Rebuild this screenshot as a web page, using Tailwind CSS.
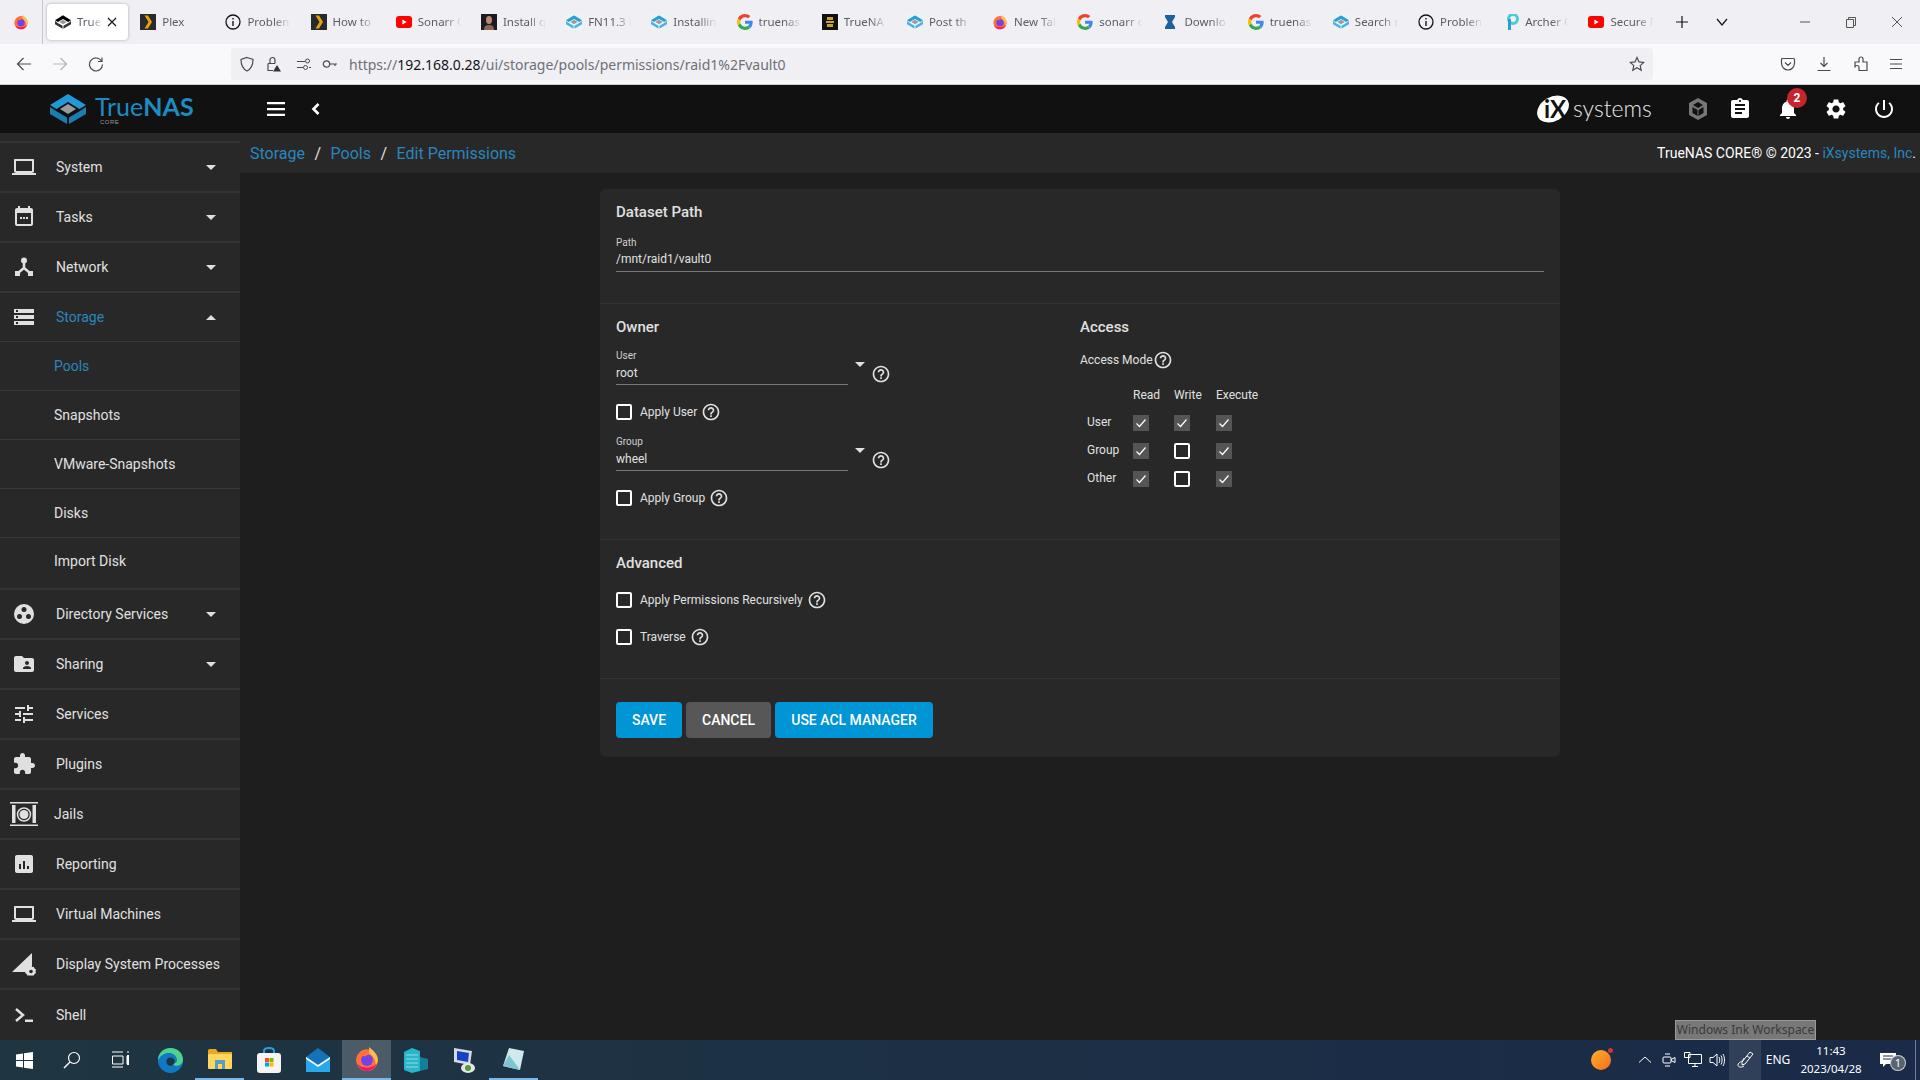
<!DOCTYPE html>
<html lang="en">
<head>
  <meta charset="UTF-8">
  <meta name="viewport" content="width=device-width, initial-scale=1">
  <title>TrueNAS - Edit Permissions</title>
  <script src="https://cdn.jsdelivr.net/npm/@tailwindcss/browser@4"></script>
</head>
<body class="w-[1920px] h-[1080px] overflow-hidden flex flex-col bg-[#1e1e1e] font-['Roboto',sans-serif] text-[14px] text-[#e0e0e0]">

  <!-- shared icons -->
  <svg class="hidden">
    <symbol id="help" viewBox="0 0 24 24"><path fill="currentColor" d="M11 18h2v-2h-2v2zm1-16C6.48 2 2 6.48 2 12s4.48 10 10 10 10-4.48 10-10S17.52 2 12 2zm0 18c-4.41 0-8-3.59-8-8s3.59-8 8-8 8 3.59 8 8-3.59 8-8 8zm0-14c-2.21 0-4 1.79-4 4h2c0-1.1.9-2 2-2s2 .9 2 2c0 2-3 1.75-3 5h2c0-2.25 3-2.5 3-5 0-2.21-1.79-4-4-4z"/></symbol>
    <symbol id="laptop" viewBox="0 0 24 24"><path fill="currentColor" d="M20 18c1.1 0 2-.9 2-2V5c0-.6-.4-1-1-1H3c-.6 0-1 .4-1 1v11c0 1.1.9 2 2 2H0v2h24v-2h-4zM4 6h16v10H4V6z"/></symbol>
    <symbol id="logo" viewBox="0 0 36 30">
      <path fill="currentColor" d="M18 0 36 11 29.5 15 18 8 6.5 15 0 11z"/>
      <path fill="#9a9a9a" d="M18 10 26 15 18 20 10 15z"/>
      <path fill="currentColor" d="M0 13 6 17 17 23.5V30L0 20zM36 13 30 17 19 23.5V30L36 20z" opacity=".8"/>
    </symbol>
    <symbol id="gicon" viewBox="0 0 48 48">
      <path fill="#EA4335" d="M24 9.5c3.54 0 6.71 1.22 9.21 3.6l6.85-6.85C35.9 2.38 30.47 0 24 0 14.62 0 6.51 5.38 2.56 13.22l7.98 6.19C12.43 13.72 17.74 9.5 24 9.5z"/>
      <path fill="#4285F4" d="M46.98 24.55c0-1.57-.15-3.09-.38-4.55H24v9.02h12.94c-.58 2.96-2.26 5.48-4.78 7.18l7.73 6c4.51-4.18 7.09-10.36 7.09-17.65z"/>
      <path fill="#FBBC05" d="M10.53 28.59c-.48-1.45-.76-2.99-.76-4.59s.27-3.14.76-4.59l-7.98-6.19C.92 16.46 0 20.12 0 24c0 3.88.92 7.54 2.56 10.78l7.97-6.19z"/>
      <path fill="#34A853" d="M24 48c6.48 0 11.93-2.13 15.89-5.81l-7.73-6c-2.15 1.45-4.92 2.3-8.16 2.3-6.26 0-11.57-4.22-13.47-9.91l-7.98 6.19C6.51 42.62 14.62 48 24 48z"/>
    </symbol>
    <symbol id="plex" viewBox="0 0 16 16"><rect width="16" height="16" fill="#282a2d"/><path fill="#e5a00d" d="M4.5 1.5H8L12 8 8 14.500H4.500L8.500 8z"/></symbol>
    <symbol id="info" viewBox="0 0 16 16"><circle cx="8" cy="8" r="7" fill="none" stroke="#15141a" stroke-width="1.300"/><path fill="#15141a" d="M7.300 7h1.400v5H7.300zM7.300 4h1.400v1.500H7.300z"/></symbol>
    <symbol id="yt" viewBox="0 0 16 16"><rect y="2" width="16" height="12" rx="3" fill="#f00"/><path fill="#fff" d="M6.400 5.400 10.800 8 6.400 10.600z"/></symbol>
    <symbol id="tn" viewBox="0 0 36 30"><rect x="-3" y="-3" width="42" height="36" fill="#eaf5fa"/><use href="#logo" class="text-[#2a9fd6]"/></symbol>
    <symbol id="fox" viewBox="0 0 24 24">
      <circle cx="12" cy="13" r="10" fill="#ff7139"/>
      <path fill="#ffbd4f" d="M14 1c3 3 8 6 8 12 0 2-1 4-2 5 0-6-3-9-6-11z"/>
      <path fill="#f5156c" d="M3 16c1 4 5 7 9 7s8-3 9-7c-2 3-5 4-9 4s-7-1-9-4z"/>
      <circle cx="12" cy="13" r="5.500" fill="#7542e5"/>
      <path fill="#ff7139" d="M6 8c2-2 6-2 8 0-2 0-3 1-4 2-1-1-2-2-4-2z"/>
    </symbol>
  </svg>

  <!-- browser tabs -->
  <div class="h-[44px] shrink-0 bg-[#f0f0f4] flex items-center font-['Noto_Sans',sans-serif] text-[11.5px] text-[#5b5b66]">
    <div class="w-[42px] h-full border-r border-[#c8c8cc] flex items-center justify-center mr-[2px] box-content">
      <svg class="w-[16px] h-[16px]"><use href="#fox"/></svg>
    </div>
    <div class="w-[85.2px] px-[2px] shrink-0">
      <div class="h-[36px] bg-white rounded-[4px] shadow-[0_0_3px_rgba(0,0,0,0.3)] flex items-center pl-[8px]">
        <svg class="w-[16px] h-[16px] text-black shrink-0"><use href="#logo"/></svg>
        <span class="ml-[6px] w-[26px] whitespace-nowrap [mask-image:linear-gradient(to_right,black_50%,transparent)]">True</span>
        <svg class="w-[12px] h-[12px] ml-[3px] shrink-0" viewBox="0 0 12 12"><path stroke="#15141a" stroke-width="1.200" d="M2 2l8 8M10 2l-8 8"/></svg>
      </div>
    </div>
    <div class="w-[85.2px] px-[10px] shrink-0 flex items-center"><svg class="w-[16px] h-[16px] shrink-0"><use href="#plex"/></svg><span class="ml-[6px] w-[44px] whitespace-nowrap [mask-image:linear-gradient(to_right,black_60%,transparent)]">Plex</span></div>
    <div class="w-[85.2px] px-[10px] shrink-0 flex items-center"><svg class="w-[16px] h-[16px] shrink-0"><use href="#info"/></svg><span class="ml-[6px] w-[44px] whitespace-nowrap [mask-image:linear-gradient(to_right,black_60%,transparent)]">Problen</span></div>
    <div class="w-[85.2px] px-[10px] shrink-0 flex items-center"><svg class="w-[16px] h-[16px] shrink-0"><use href="#plex"/></svg><span class="ml-[6px] w-[44px] whitespace-nowrap [mask-image:linear-gradient(to_right,black_60%,transparent)]">How to</span></div>
    <div class="w-[85.2px] px-[10px] shrink-0 flex items-center"><svg class="w-[16px] h-[16px] shrink-0"><use href="#yt"/></svg><span class="ml-[6px] w-[44px] whitespace-nowrap [mask-image:linear-gradient(to_right,black_60%,transparent)]">Sonarr C</span></div>
    <div class="w-[85.2px] px-[10px] shrink-0 flex items-center"><svg class="w-[16px] h-[16px] shrink-0" viewBox="0 0 16 16"><rect width="16" height="16" fill="#1d1a22"/><ellipse cx="8" cy="6" rx="3" ry="4" fill="#b98a72"/><path fill="#8c6553" d="M3 16c0-4 2-5 5-5s5 1 5 5z"/></svg><span class="ml-[6px] w-[44px] whitespace-nowrap [mask-image:linear-gradient(to_right,black_60%,transparent)]">Install q</span></div>
    <div class="w-[85.2px] px-[10px] shrink-0 flex items-center"><svg class="w-[16px] h-[16px] shrink-0"><use href="#tn"/></svg><span class="ml-[6px] w-[44px] whitespace-nowrap [mask-image:linear-gradient(to_right,black_60%,transparent)]">FN11.3 i</span></div>
    <div class="w-[85.2px] px-[10px] shrink-0 flex items-center"><svg class="w-[16px] h-[16px] shrink-0"><use href="#tn"/></svg><span class="ml-[6px] w-[44px] whitespace-nowrap [mask-image:linear-gradient(to_right,black_60%,transparent)]">Installin</span></div>
    <div class="w-[85.2px] px-[10px] shrink-0 flex items-center"><svg class="w-[16px] h-[16px] shrink-0"><use href="#gicon"/></svg><span class="ml-[6px] w-[44px] whitespace-nowrap [mask-image:linear-gradient(to_right,black_60%,transparent)]">truenas</span></div>
    <div class="w-[85.2px] px-[10px] shrink-0 flex items-center"><svg class="w-[16px] h-[16px] shrink-0" viewBox="0 0 16 16"><rect width="16" height="16" fill="#111"/><path fill="#c9a227" d="M5 3h6v3H5zM4 7h8v2H4zM5 10h6v3H5z"/></svg><span class="ml-[6px] w-[44px] whitespace-nowrap [mask-image:linear-gradient(to_right,black_60%,transparent)]">TrueNA</span></div>
    <div class="w-[85.2px] px-[10px] shrink-0 flex items-center"><svg class="w-[16px] h-[16px] shrink-0"><use href="#tn"/></svg><span class="ml-[6px] w-[44px] whitespace-nowrap [mask-image:linear-gradient(to_right,black_60%,transparent)]">Post th</span></div>
    <div class="w-[85.2px] px-[10px] shrink-0 flex items-center"><svg class="w-[16px] h-[16px] shrink-0"><use href="#fox"/></svg><span class="ml-[6px] w-[44px] whitespace-nowrap [mask-image:linear-gradient(to_right,black_60%,transparent)]">New Tal</span></div>
    <div class="w-[85.2px] px-[10px] shrink-0 flex items-center"><svg class="w-[16px] h-[16px] shrink-0"><use href="#gicon"/></svg><span class="ml-[6px] w-[44px] whitespace-nowrap [mask-image:linear-gradient(to_right,black_60%,transparent)]">sonarr d</span></div>
    <div class="w-[85.2px] px-[10px] shrink-0 flex items-center"><svg class="w-[16px] h-[16px] shrink-0" viewBox="0 0 16 16"><path fill="#1f5f9c" d="M3 1h10v2l-3 5 3 5v2H3v-2l3-5-3-5z"/></svg><span class="ml-[6px] w-[44px] whitespace-nowrap [mask-image:linear-gradient(to_right,black_60%,transparent)]">Downlo</span></div>
    <div class="w-[85.2px] px-[10px] shrink-0 flex items-center"><svg class="w-[16px] h-[16px] shrink-0"><use href="#gicon"/></svg><span class="ml-[6px] w-[44px] whitespace-nowrap [mask-image:linear-gradient(to_right,black_60%,transparent)]">truenas</span></div>
    <div class="w-[85.2px] px-[10px] shrink-0 flex items-center"><svg class="w-[16px] h-[16px] shrink-0"><use href="#tn"/></svg><span class="ml-[6px] w-[44px] whitespace-nowrap [mask-image:linear-gradient(to_right,black_60%,transparent)]">Search r</span></div>
    <div class="w-[85.2px] px-[10px] shrink-0 flex items-center"><svg class="w-[16px] h-[16px] shrink-0"><use href="#info"/></svg><span class="ml-[6px] w-[44px] whitespace-nowrap [mask-image:linear-gradient(to_right,black_60%,transparent)]">Problen</span></div>
    <div class="w-[85.2px] px-[10px] shrink-0 flex items-center"><svg class="w-[16px] h-[16px] shrink-0" viewBox="0 0 16 16"><circle cx="10" cy="5" r="4.500" fill="none" stroke="#4acbd6" stroke-width="3"/><rect x="5" y="5" width="3" height="11" fill="#2a9fd6"/></svg><span class="ml-[6px] w-[44px] whitespace-nowrap [mask-image:linear-gradient(to_right,black_60%,transparent)]">Archer C</span></div>
    <div class="w-[85.2px] px-[10px] shrink-0 flex items-center"><svg class="w-[16px] h-[16px] shrink-0"><use href="#yt"/></svg><span class="ml-[6px] w-[44px] whitespace-nowrap [mask-image:linear-gradient(to_right,black_60%,transparent)]">Secure F</span></div>
    <svg class="w-[14px] h-[14px] ml-[11px]" viewBox="0 0 14 14"><path stroke="#15141a" stroke-width="1.200" d="M7 1v12M1 7h12"/></svg>
    <svg class="w-[14px] h-[14px] ml-[26px]" viewBox="0 0 14 14"><path fill="none" stroke="#15141a" stroke-width="1.200" d="M2 4l5 6 5-6"/></svg>
    <div class="ml-auto flex text-[#444]">
      <div class="w-[46px] flex justify-center"><svg class="w-[12px] h-[12px]" viewBox="0 0 12 12"><path stroke="#555" d="M1 6h10"/></svg></div>
      <div class="w-[46px] flex justify-center"><svg class="w-[12px] h-[12px]" viewBox="0 0 12 12"><path fill="none" stroke="#555" d="M1.500 3.500h7v8h-7zM3.500 3.500v-2h7v8h-2"/></svg></div>
      <div class="w-[46px] flex justify-center"><svg class="w-[12px] h-[12px]" viewBox="0 0 12 12"><path stroke="#555" d="M1 1l10 10M11 1L1 11"/></svg></div>
    </div>
  </div>

  <!-- browser nav bar -->
  <div class="h-[41px] shrink-0 bg-[#f9f9fb] border-b border-[#d0d0d4] flex items-center">
    <svg class="w-[16px] h-[16px] ml-[16px]" viewBox="0 0 16 16"><path fill="none" stroke="#4a4a55" stroke-width="1.200" d="M15 8H1.500M7.500 2 1.500 8l6 6"/></svg>
    <svg class="w-[16px] h-[16px] ml-[20px]" viewBox="0 0 16 16"><path fill="none" stroke="#b5b5ba" stroke-width="1.200" d="M1 8h13.500M8.500 2l6 6-6 6"/></svg>
    <svg class="w-[16px] h-[16px] ml-[20px]" viewBox="0 0 16 16"><path fill="none" stroke="#4a4a55" stroke-width="1.200" d="M13.500 5A6.500 6.500 0 1 0 14.500 8.500M14 1.500V5.500H10"/></svg>
    <!-- url bar -->
    <div class="ml-[127px] w-[1422px] h-[32px] bg-[#f0f0f4] rounded-[4px] flex items-center relative font-['Noto_Sans',sans-serif]">
      <svg class="w-[16px] h-[16px] ml-[8px]" viewBox="0 0 16 16"><path fill="none" stroke="#4a4a55" stroke-width="1.200" d="M8 1.500 14 3.500C14 9 12 13 8 15 4 13 2 9 2 3.500z"/></svg>
      <svg class="w-[16px] h-[16px] ml-[10px]" viewBox="0 0 16 16"><path fill="none" stroke="#4a4a55" stroke-width="1.200" d="M3 7.500h7M3 7.500v7h5M5 7.500V4a2.500 2.500 0 0 1 5 0v3.500"/><path fill="#333" d="M12 9l4 6.500H8z"/></svg>
      <svg class="w-[16px] h-[16px] ml-[15px]" viewBox="0 0 16 16"><path fill="none" stroke="#4a4a55" d="M1 5.500h8M13 11.500h2M1 11.500h6"/><circle cx="11.500" cy="5" r="2" fill="none" stroke="#4a4a55"/><circle cx="9.500" cy="11.500" r="2" fill="none" stroke="#4a4a55"/></svg>
      <svg class="w-[16px] h-[16px] ml-[10px]" viewBox="0 0 16 16"><circle cx="4.500" cy="8" r="3.200" fill="none" stroke="#4a4a55" stroke-width="1.200"/><path fill="none" stroke="#4a4a55" stroke-width="1.200" d="M8 8h7M13 8v2"/></svg>
      <span class="ml-[11px] text-[14px] text-[#6f6f78] whitespace-nowrap">https://<span class="text-[#15141a]">192.168.0.28</span>/ui/storage/pools/permissions/raid1%2Fvault0</span>
      <svg class="w-[16px] h-[16px] ml-auto mr-[8px]" viewBox="0 0 16 16"><path fill="none" stroke="#4a4a55" stroke-width="1.200" d="M8 1.500l2 4.400 4.700.5-3.500 3.200 1 4.700L8 11.800l-4.200 2.500 1-4.700L1.300 6.400 6 5.900z"/></svg>
    </div>
    <svg class="w-[16px] h-[16px] ml-[127px]" viewBox="0 0 16 16"><path fill="none" stroke="#4a4a55" stroke-width="1.200" d="M2.500 2.500h11c.6 0 1 .4 1 1V7c0 4-3 7-6.500 7S1.500 11 1.500 7V3.500c0-.6.400-1 1-1zM5 6.500 8 9.500l3-3"/></svg>
    <svg class="w-[16px] h-[16px] ml-[20px]" viewBox="0 0 16 16"><path fill="none" stroke="#4a4a55" stroke-width="1.200" d="M8 1v9M4.500 7 8 10.500 11.500 7M1.500 14.500h13"/></svg>
    <svg class="w-[16px] h-[16px] ml-[21px]" viewBox="0 0 16 16"><path fill="none" stroke="#4a4a55" stroke-width="1.200" d="M2 6h4V3a2 2 0 0 1 4 0v3h4v8.500H6v-3a2 2 0 0 0-4 0z"/></svg>
    <svg class="w-[16px] h-[16px] ml-[19px]" viewBox="0 0 16 16"><path stroke="#4a4a55" stroke-width="1.200" d="M2 3.500h12M2 8h12M2 12.500h12"/></svg>
  </div>

  <!-- truenas top bar -->
  <header class="h-[48px] shrink-0 bg-[#111111] flex items-center text-white">
    <div class="w-[240px] shrink-0 flex items-center pl-[50px]">
      <svg class="w-[36px] h-[30px] text-[#1f9ad6]"><use href="#logo"/></svg>
      <div class="ml-[9px] relative h-[38px] w-[100px]">
        <span class="absolute left-0 top-[1px] font-['Lato',sans-serif] text-[25px] leading-[30px] text-[#1e8bc3] whitespace-nowrap">True<span class="font-bold">NAS</span></span>
        <span class="absolute left-[5px] top-[29px] font-['Liberation_Sans',sans-serif] text-[6px] leading-[7px] tracking-[0.5px] text-[#9a9a9a]">CORE</span>
      </div>
    </div>
    <svg class="w-[24px] h-[24px] ml-[24px]" viewBox="0 0 24 24"><path fill="#fff" d="M3 5h18v2.300H3zM3 10.900h18v2.300H3zM3 16.800h18v2.300H3z"/></svg>
    <svg class="w-[24px] h-[24px] ml-[16px]" viewBox="0 0 24 24"><path fill="none" stroke="#fff" stroke-width="2.600" d="M14.500 7l-5 5 5 5"/></svg>
    <svg class="w-[116px] h-[32px] ml-auto" viewBox="0 0 116 32">
      <ellipse cx="17" cy="16" rx="17" ry="12" fill="#fff" transform="rotate(-30 17 16)"/>
      <text x="8" y="25" font-family="Lato" font-weight="700" font-size="24" fill="#111">iX</text>
      <text x="37" y="24" font-family="Lato" font-weight="300" font-size="23" fill="#e6e6e6">systems</text>
    </svg>
    <svg class="w-[24px] h-[24px] ml-[34px]" viewBox="0 0 24 24"><path fill="#777" d="M12 1 21 6v12l-9 5-9-5V6zM12 5 7 8l5 3 5-3zM6.500 10v6l5 3v-6zM17.500 10l-5 3v6l5-3z"/></svg>
    <svg class="w-[24px] h-[24px] ml-[18px]" viewBox="0 0 24 24"><path fill="#fff" d="M19 3h-4.180C14.400 1.840 13.300 1 12 1c-1.300 0-2.400.84-2.820 2H5c-1.100 0-2 .9-2 2v14c0 1.100.9 2 2 2h14c1.100 0 2-.9 2-2V5c0-1.100-.9-2-2-2zm-7 0c.55 0 1 .45 1 1s-.45 1-1 1-1-.45-1-1 .45-1 1-1zm2 14H7v-2h7v2zm3-4H7v-2h10v2zm0-4H7V7h10v2z"/></svg>
    <div class="relative ml-[24px] w-[24px] h-[24px]">
      <svg class="w-[24px] h-[24px]" viewBox="0 0 24 24"><path fill="#fff" d="M12 22c1.100 0 2-.9 2-2h-4c0 1.100.89 2 2 2zm6-6v-5c0-3.070-1.640-5.640-4.500-6.320V4c0-.83-.67-1.500-1.500-1.500s-1.500.67-1.500 1.500v.68C7.630 5.360 6 7.920 6 11v5l-2 2v1h16v-1l-2-2z"/></svg>
      <span class="absolute left-[11px] top-[-9px] w-[20px] h-[20px] rounded-full bg-[#c7252e] text-white text-[12px] leading-[20px] font-bold text-center">2</span>
    </div>
    <svg class="w-[24px] h-[24px] ml-[24px]" viewBox="0 0 24 24"><path fill="#fff" d="M19.140 12.940c.04-.3.06-.61.06-.94 0-.32-.02-.64-.07-.94l2.030-1.580c.18-.14.23-.41.12-.61l-1.920-3.320c-.12-.22-.37-.29-.59-.22l-2.390.96c-.5-.38-1.030-.7-1.620-.94l-.36-2.540c-.04-.24-.24-.41-.48-.41h-3.840c-.24 0-.43.17-.47.41l-.36 2.540c-.59.24-1.130.57-1.620.94l-2.390-.96c-.22-.08-.47 0-.59.22L2.740 8.870c-.12.21-.08.47.12.61l2.030 1.580c-.05.3-.09.63-.09.94s.02.64.07.94l-2.030 1.580c-.18.14-.23.41-.12.61l1.920 3.320c.12.22.37.29.59.22l2.390-.96c.5.38 1.030.7 1.620.94l.36 2.540c.05.24.24.41.48.41h3.840c.24 0 .44-.17.47-.41l.36-2.540c.59-.24 1.130-.56 1.620-.94l2.390.96c.22.08.47 0 .59-.22l1.920-3.320c.12-.22.07-.47-.12-.61l-2.010-1.580zM12 15.600c-1.980 0-3.600-1.620-3.600-3.600s1.620-3.600 3.600-3.600 3.600 1.620 3.600 3.600-1.620 3.600-3.600 3.600z"/></svg>
    <svg class="w-[24px] h-[24px] ml-[24px] mr-[24px]" viewBox="0 0 24 24"><path fill="#fff" d="M13 3h-2v10h2V3zm4.830 2.170l-1.420 1.420C17.990 7.860 19 9.810 19 12c0 3.870-3.130 7-7 7s-7-3.130-7-7c0-2.190 1.010-4.140 2.580-5.420L6.170 5.170C4.230 6.820 3 9.260 3 12c0 4.970 4.030 9 9 9s9-4.030 9-9c0-2.740-1.230-5.180-3.170-6.830z"/></svg>
  </header>

  <!-- page body -->
  <div class="flex-1 min-h-0 flex">
    <!-- sidebar -->
    <nav class="w-[240px] shrink-0 bg-[#282828] pt-[8px] overflow-hidden">
      <div class="border-t-2 border-[#343434]"></div>
      <a class="h-[50px] border-b-2 border-[#343434] flex items-center pl-[12px] pr-[24px]"><svg class="w-[24px] h-[24px]"><use href="#laptop"/></svg><span class="ml-[20px]">System</span><span class="ml-auto w-0 h-0 border-x-[5px] border-x-transparent border-t-[5px] border-t-[#e0e0e0]"></span></a>
      <a class="h-[50px] border-b-2 border-[#343434] flex items-center pl-[12px] pr-[24px]"><svg class="w-[24px] h-[24px]" viewBox="0 0 24 24"><path fill="currentColor" d="M19 3h-1V1h-2v2H8V1H6v2H5c-1.110 0-2 .9-2 2v14c0 1.100.89 2 2 2h14c1.100 0 2-.9 2-2V5c0-1.100-.9-2-2-2zm0 16H5V8h14v11zM8 12h2v2H8zm3 0h2v2h-2zm3 0h2v2h-2z"/></svg><span class="ml-[20px]">Tasks</span><span class="ml-auto w-0 h-0 border-x-[5px] border-x-transparent border-t-[5px] border-t-[#e0e0e0]"></span></a>
      <a class="h-[50px] border-b-2 border-[#343434] flex items-center pl-[12px] pr-[24px]"><svg class="w-[24px] h-[24px]" viewBox="0 0 24 24"><circle cx="12" cy="5.500" r="3" fill="currentColor"/><path fill="none" stroke="currentColor" stroke-width="2.500" d="M12 7v6L6 18M12 13l6 5"/><path fill="currentColor" d="M3 16h5v5H3zM16 16h5v5h-5z"/></svg><span class="ml-[20px]">Network</span><span class="ml-auto w-0 h-0 border-x-[5px] border-x-transparent border-t-[5px] border-t-[#e0e0e0]"></span></a>
      <a class="h-[49px] border-b border-[#383838] flex items-center pl-[12px] pr-[24px] text-[#2a86bd]"><svg class="w-[24px] h-[24px] text-[#e0e0e0]" viewBox="0 0 24 24"><path fill="currentColor" d="M2 20h20v-4H2v4zm2-3h2v2H4v-2zM2 4v4h20V4H2zm4 3H4V5h2v2zm-4 7h20v-4H2v4zm2-3h2v2H4v-2z"/></svg><span class="ml-[20px]">Storage</span><span class="ml-auto w-0 h-0 border-x-[5px] border-x-transparent border-b-[5px] border-b-[#e0e0e0]"></span></a>
      <a class="h-[49px] border-b border-[#383838] flex items-center pl-[54px] text-[#2a86bd]">Pools</a>
      <a class="h-[49px] border-b border-[#383838] flex items-center pl-[54px]">Snapshots</a>
      <a class="h-[49px] border-b border-[#383838] flex items-center pl-[54px]">VMware-Snapshots</a>
      <a class="h-[49px] border-b border-[#383838] flex items-center pl-[54px]">Disks</a>
      <a class="h-[52px] border-b-2 border-[#343434] flex items-center pl-[54px] pb-[3px]">Import Disk</a>
      <a class="h-[50px] border-b-2 border-[#343434] flex items-center pl-[12px] pr-[24px]"><svg class="w-[24px] h-[24px]" viewBox="0 0 24 24"><path fill="currentColor" fill-rule="evenodd" d="M12 2a10 10 0 1 0 0 20 10 10 0 0 0 0-20zM12 5a2.500 2.500 0 1 1 0 5 2.500 2.500 0 0 1 0-5zM7.500 12a2.500 2.500 0 1 1 0 5 2.500 2.500 0 0 1 0-5zM16.500 12a2.500 2.500 0 1 1 0 5 2.500 2.500 0 0 1 0-5z"/></svg><span class="ml-[20px]">Directory Services</span><span class="ml-auto w-0 h-0 border-x-[5px] border-x-transparent border-t-[5px] border-t-[#e0e0e0]"></span></a>
      <a class="h-[50px] border-b-2 border-[#343434] flex items-center pl-[12px] pr-[24px]"><svg class="w-[24px] h-[24px]" viewBox="0 0 24 24"><path fill="currentColor" d="M20 6h-8l-2-2H4c-1.100 0-1.990.9-1.990 2L2 18c0 1.100.9 2 2 2h16c1.100 0 2-.9 2-2V8c0-1.100-.9-2-2-2zm-5 3c1.100 0 2 .9 2 2s-.9 2-2 2-2-.9-2-2 .9-2 2-2zm4 8h-8v-1c0-1.330 2.670-2 4-2s4 .67 4 2v1z"/></svg><span class="ml-[20px]">Sharing</span><span class="ml-auto w-0 h-0 border-x-[5px] border-x-transparent border-t-[5px] border-t-[#e0e0e0]"></span></a>
      <a class="h-[50px] border-b-2 border-[#343434] flex items-center pl-[12px]"><svg class="w-[24px] h-[24px]" viewBox="0 0 24 24"><path fill="currentColor" d="M3 17v2h6v-2H3zM3 5v2h10V5H3zm10 16v-2h8v-2h-8v-2h-2v6h2zM7 9v2H3v2h4v2h2V9H7zm14 4v-2H11v2h10zm-6-4h2V7h4V5h-4V3h-2v6z"/></svg><span class="ml-[20px]">Services</span></a>
      <a class="h-[50px] border-b-2 border-[#343434] flex items-center pl-[12px]"><svg class="w-[24px] h-[24px]" viewBox="0 0 24 24"><path fill="currentColor" d="M20.500 11H19V7c0-1.100-.9-2-2-2h-4V3.500C13 2.120 11.880 1 10.500 1S8 2.120 8 3.500V5H4c-1.100 0-1.990.9-1.990 2v3.800H3.500c1.490 0 2.700 1.210 2.700 2.700s-1.210 2.700-2.700 2.700H2V20c0 1.100.9 2 2 2h3.800v-1.500c0-1.490 1.210-2.700 2.700-2.700 1.490 0 2.700 1.210 2.700 2.700V22H17c1.100 0 2-.9 2-2v-4h1.500c1.380 0 2.500-1.120 2.500-2.500S21.880 11 20.500 11z"/></svg><span class="ml-[20px]">Plugins</span></a>
      <a class="h-[50px] border-b-2 border-[#343434] flex items-center pl-[10px]"><svg class="w-[28px] h-[24px]" viewBox="0 0 28 24"><path fill="currentColor" d="M0 0h28v1.500H0zM0 22.500h28V24H0zM2 3h3.500v18H2zM22.500 3H26v18h-3.500z"/><circle cx="14" cy="12.500" r="6.500" fill="none" stroke="currentColor" stroke-width="1.500"/><circle cx="14" cy="12.500" r="4.500" fill="currentColor"/></svg><span class="ml-[16px]">Jails</span></a>
      <a class="h-[50px] border-b-2 border-[#343434] flex items-center pl-[12px]"><svg class="w-[24px] h-[24px]" viewBox="0 0 24 24"><path fill="currentColor" d="M19 3H5c-1.100 0-2 .9-2 2v14c0 1.100.9 2 2 2h14c1.100 0 2-.9 2-2V5c0-1.100-.9-2-2-2zM9 17H7v-5h2v5zm4 0h-2V9h2v8zm4 0h-2v-3h2v3z"/></svg><span class="ml-[20px]">Reporting</span></a>
      <a class="h-[50px] border-b-2 border-[#343434] flex items-center pl-[12px]"><svg class="w-[24px] h-[24px]"><use href="#laptop"/></svg><span class="ml-[20px]">Virtual Machines</span></a>
      <a class="h-[50px] border-b-2 border-[#343434] flex items-center pl-[12px]"><svg class="w-[24px] h-[24px]" viewBox="0 0 24 24"><path fill="currentColor" d="M0 20 20 1v13.500A6 6 0 0 0 14 20z"/><path fill="currentColor" d="M19 14.500l1 1.500 1.800-.2.700 1.700 1.500 1-.5 1.700.5 1.700-1.500 1-.7 1.700H15.300l-.7-1.700-1.500-1 .5-1.700-.5-1.700 1.500-1 .7-1.700 1.800.2z" transform="translate(0 -1)"/><circle cx="19" cy="19.500" r="1.800" fill="#282828"/></svg><span class="ml-[20px] whitespace-nowrap">Display System Processes</span></a>
      <a class="h-[50px] flex items-center pl-[12px]"><svg class="w-[24px] h-[24px]" viewBox="0 0 24 24"><path fill="none" stroke="currentColor" stroke-width="2.500" d="M4 6l7 6-7 6"/><path fill="currentColor" d="M13 16.500h8V19h-8z"/></svg><span class="ml-[20px]">Shell</span></a>
    </nav>

    <main class="flex-1 min-w-0 flex flex-col">
      <!-- breadcrumbs -->
      <div class="h-[40px] bg-[#282828] flex items-center pl-[10px] pr-[4px] pt-[1px]">
        <div class="flex items-center text-[16px] text-[#2a86bd]">
          <span>Storage</span><span class="mx-[9.5px] text-[#e0e0e0]">/</span><span>Pools</span><span class="mx-[9.5px] text-[#e0e0e0]">/</span><span>Edit Permissions</span>
        </div>
        <div class="ml-auto text-white">TrueNAS CORE® © 2023 - <span class="text-[#2a86bd]">iXsystems, Inc</span>.</div>
      </div>

      <!-- permissions card -->
      <div class="w-[960px] h-[568px] ml-[360px] mt-[16px] bg-[#282828] rounded-[6px] flex flex-col">
        <section class="h-[115px] shrink-0 border-b border-[#333333] px-[16px] pt-[13px]">
          <h3 class="font-medium text-[15px] leading-[21px]">Dataset Path</h3>
          <div class="mt-[14px] text-[10px] leading-[12px] text-[#cfcfcf]">Path</div>
          <div class="mt-[2px] pb-[4px] text-[12px] leading-[16px] border-b border-[#7a7a7a]">/mnt/raid1/vault0</div>
        </section>

        <section class="h-[236px] shrink-0 border-b border-[#333333] flex pt-[13px]">
          <div class="w-[480px] pl-[16px]">
            <h3 class="font-medium text-[15px] leading-[20px]">Owner</h3>
            <div class="mt-[13px] flex items-start">
              <div class="w-[232px]">
                <div class="text-[10px] leading-[12px] text-[#cfcfcf]">User</div>
                <div class="mt-[3px] pb-[3px] text-[12px] leading-[16px] border-b border-[#7a7a7a]">root</div>
              </div>
              <span class="ml-[7px] mt-[12px] w-0 h-0 border-x-[5px] border-x-transparent border-t-[5px] border-t-[#e0e0e0]"></span>
              <svg class="ml-[6px] mt-[14px] w-[20px] h-[20px]"><use href="#help"/></svg>
            </div>
            <label class="mt-[19px] h-[16px] flex items-center"><span class="w-[16px] h-[16px] border-2 border-white rounded-[2px]"></span><span class="ml-[8px] text-[12px]">Apply User</span><svg class="ml-[4px] w-[20px] h-[20px]"><use href="#help"/></svg></label>
            <div class="mt-[16px] flex items-start">
              <div class="w-[232px]">
                <div class="text-[10px] leading-[12px] text-[#cfcfcf]">Group</div>
                <div class="mt-[3px] pb-[3px] text-[12px] leading-[16px] border-b border-[#7a7a7a]">wheel</div>
              </div>
              <span class="ml-[7px] mt-[12px] w-0 h-0 border-x-[5px] border-x-transparent border-t-[5px] border-t-[#e0e0e0]"></span>
              <svg class="ml-[6px] mt-[14px] w-[20px] h-[20px]"><use href="#help"/></svg>
            </div>
            <label class="mt-[19px] h-[16px] flex items-center"><span class="w-[16px] h-[16px] border-2 border-white rounded-[2px]"></span><span class="ml-[8px] text-[12px]">Apply Group</span><svg class="ml-[4px] w-[20px] h-[20px]"><use href="#help"/></svg></label>
          </div>
          <div class="flex-1">
            <h3 class="font-medium text-[15px] leading-[20px]">Access</h3>
            <div class="mt-[15px] h-[16px] flex items-center text-[12px]"><span>Access Mode</span><svg class="w-[20px] h-[20px]"><use href="#help"/></svg></div>
            <div class="mt-[19px] ml-[7px] grid grid-cols-[46px_41px_42px_auto] gap-y-[12px] text-[12px] leading-[16px]">
              <span class="mb-[2px]"></span><span>Read</span><span>Write</span><span>Execute</span>
              <span class="-translate-y-px">User</span>
              <span class="w-[16px] h-[16px] bg-[#555555] flex items-center justify-center"><svg class="w-[12px] h-[12px]" viewBox="0 0 12 12"><path fill="none" stroke="#fff" stroke-width="1.200" d="M1.500 6.500 4.500 9.500 10.500 2.500"/></svg></span>
              <span class="w-[16px] h-[16px] bg-[#555555] flex items-center justify-center"><svg class="w-[12px] h-[12px]" viewBox="0 0 12 12"><path fill="none" stroke="#fff" stroke-width="1.200" d="M1.500 6.500 4.500 9.500 10.500 2.500"/></svg></span>
              <span class="w-[16px] h-[16px] bg-[#555555] flex items-center justify-center"><svg class="w-[12px] h-[12px]" viewBox="0 0 12 12"><path fill="none" stroke="#fff" stroke-width="1.200" d="M1.500 6.500 4.500 9.500 10.500 2.500"/></svg></span>
              <span class="-translate-y-px">Group</span>
              <span class="w-[16px] h-[16px] bg-[#555555] flex items-center justify-center"><svg class="w-[12px] h-[12px]" viewBox="0 0 12 12"><path fill="none" stroke="#fff" stroke-width="1.200" d="M1.500 6.500 4.500 9.500 10.500 2.500"/></svg></span>
              <span class="w-[16px] h-[16px] border-2 border-white rounded-[2px]"></span>
              <span class="w-[16px] h-[16px] bg-[#555555] flex items-center justify-center"><svg class="w-[12px] h-[12px]" viewBox="0 0 12 12"><path fill="none" stroke="#fff" stroke-width="1.200" d="M1.500 6.500 4.500 9.500 10.500 2.500"/></svg></span>
              <span class="-translate-y-px">Other</span>
              <span class="w-[16px] h-[16px] bg-[#555555] flex items-center justify-center"><svg class="w-[12px] h-[12px]" viewBox="0 0 12 12"><path fill="none" stroke="#fff" stroke-width="1.200" d="M1.500 6.500 4.500 9.500 10.500 2.500"/></svg></span>
              <span class="w-[16px] h-[16px] border-2 border-white rounded-[2px]"></span>
              <span class="w-[16px] h-[16px] bg-[#555555] flex items-center justify-center"><svg class="w-[12px] h-[12px]" viewBox="0 0 12 12"><path fill="none" stroke="#fff" stroke-width="1.200" d="M1.500 6.500 4.500 9.500 10.500 2.500"/></svg></span>
            </div>
          </div>
        </section>

        <section class="h-[139px] shrink-0 border-b border-[#333333] px-[16px] pt-[13px]">
          <h3 class="font-medium text-[15px] leading-[20px]">Advanced</h3>
          <label class="mt-[19px] h-[16px] flex items-center"><span class="w-[16px] h-[16px] border-2 border-white rounded-[2px]"></span><span class="ml-[8px] text-[12px]">Apply Permissions Recursively</span><svg class="ml-[4px] w-[20px] h-[20px]"><use href="#help"/></svg></label>
          <label class="mt-[21px] h-[16px] flex items-center"><span class="w-[16px] h-[16px] border-2 border-white rounded-[2px]"></span><span class="ml-[8px] text-[12px]">Traverse</span><svg class="ml-[4px] w-[20px] h-[20px]"><use href="#help"/></svg></label>
        </section>

        <section class="px-[16px] pt-[23px] flex gap-[4px] text-white font-medium">
          <button class="w-[66px] h-[36px] bg-[#0095d5] rounded-[4px]">SAVE</button>
          <button class="w-[85px] h-[36px] bg-[#575757] rounded-[4px]">CANCEL</button>
          <button class="w-[158px] h-[36px] bg-[#0095d5] rounded-[4px]">USE ACL MANAGER</button>
        </section>
      </div>
    </main>
  </div>

  <!-- windows taskbar -->
  <footer class="h-[40px] shrink-0 bg-gradient-to-r from-[#1f3541] to-[#1a2a48] flex items-stretch relative text-white font-['Noto_Sans',sans-serif]">
    <div class="w-[48px] flex items-center justify-center"><svg class="w-[17px] h-[17px]" viewBox="0 0 17 17"><path fill="#fff" d="M0 2.400 7 1.400V8H0zM8 1.300 17 0V8H8zM0 9h7v6.600L0 14.600zM8 9h9v8L8 15.700z"/></svg></div>
    <div class="w-[48px] flex items-center justify-center"><svg class="w-[18px] h-[18px]" viewBox="0 0 18 18"><circle cx="11" cy="7" r="5.500" fill="none" stroke="#fff" stroke-width="1.200"/><path stroke="#fff" stroke-width="1.500" d="M7 11l-6 6"/></svg></div>
    <div class="w-[50px] flex items-center justify-center"><svg class="w-[18px] h-[18px]" viewBox="0 0 18 18"><path fill="none" stroke="#fff" d="M0 1h11M0 16h11M.5 5h10.500v8H.5zM15 1h2M15 5v8"/><path stroke="#fff" stroke-width="2" d="M16 4v10"/></svg></div>
    <div class="w-[49px] flex items-center justify-center"><svg class="w-[25px] h-[25px]" viewBox="0 0 24 24"><circle cx="12" cy="12" r="12" fill="#0e7ac4"/><path fill="#4fd18b" d="M12 0c7 0 12 5 12 11 0 4-3 6-6 6-2 0-4-1-4-2 3 0 5-2 4-5C17 6 12 4 8 5 4 6 1 9 0 12 0 5 5 0 12 0z"/><circle cx="12" cy="13" r="4" fill="#1e3541"/></svg></div>
    <div class="w-[49px] flex items-center justify-center border-b-2 border-[#76b9ed]"><svg class="w-[24px] h-[20px]" viewBox="0 0 24 20"><path fill="#e8a91f" d="M0 2c0-1 .5-2 1.500-2H8l2 3h14v3H0z"/><rect y="5" width="24" height="15" rx="1" fill="#fbd75b"/><rect x="7" y="11" width="10" height="9" fill="#5b9bc4"/><rect x="10" y="15" width="4" height="5" fill="#fbd75b"/></svg></div>
    <div class="w-[49px] flex items-center justify-center"><svg class="w-[24px] h-[26px]" viewBox="0 0 24 26"><path fill="none" stroke="#2aa0d8" stroke-width="2" d="M7 8V4c0-2 2-3 5-3s5 1 5 3v4"/><rect y="6" width="24" height="20" rx="3" fill="#f4f4f4"/><path fill="#f25022" d="M8 11h4v4H8z"/><path fill="#7fba00" d="M12.500 11h4v4h-4z"/><path fill="#00a4ef" d="M8 15.500h4v4H8z"/><path fill="#ffb900" d="M12.500 15.500h4v4h-4z"/></svg></div>
    <div class="w-[49px] flex items-center justify-center"><svg class="w-[24px] h-[24px]" viewBox="0 0 24 24"><path fill="#1572b8" d="M0 9 12 0l12 9v15H0z"/><path fill="#28a8ea" d="M0 9l12 8 12-8v15H0z"/><path fill="#fff" d="M0 9l12 8 12-8v2L12 19 0 11z"/></svg></div>
    <div class="w-[49px] bg-white/20 flex items-center justify-center border-b-2 border-[#76b9ed]"><svg class="w-[26px] h-[26px]"><use href="#fox"/></svg></div>
    <div class="w-[49px] flex items-center justify-center"><svg class="w-[24px] h-[26px]" viewBox="0 0 24 26"><path fill="#27b6c9" d="M0 5 8 1l8 3v20l-8 2-8-3z"/><path fill="#157f96" d="M16 10l8 2v10l-8 2z"/><path stroke="#fff" stroke-opacity=".5" d="M2 8l12 0M2 12h12M2 16h12M2 20h12"/></svg></div>
    <div class="w-[49px] flex items-center justify-center"><svg class="w-[24px] h-[26px]" viewBox="0 0 24 26"><path fill="#d6dbe0" d="M1 1l18 3-2 14L1 15z"/><path fill="#1542c4" d="M4 4l12 2-1 9L4 13z"/><ellipse cx="15" cy="21" rx="7" ry="5" fill="#e6e6e6"/><circle cx="15" cy="21" r="3" fill="#4f9e3c"/></svg></div>
    <div class="w-[49px] flex items-center justify-center border-b-2 border-[#76b9ed]"><svg class="w-[24px] h-[24px]" viewBox="0 0 24 24"><path fill="#cfe9ee" d="M7 1l15 3-4 19L1 19z"/><path fill="#7fc4cf" d="M1 19 7 8l11 15z"/></svg></div>

    <!-- tray -->
    <div class="ml-auto flex items-stretch">
      <div class="w-[34px] flex items-center justify-center relative"><span class="w-[20px] h-[20px] rounded-full bg-gradient-to-br from-[#ffb02e] to-[#f56a1c]"></span><span class="absolute left-[24px] top-[8px] w-[5px] h-[5px] rounded-full bg-[#d13438]"></span></div>
      <div class="w-[15px]"></div>
      <div class="w-[24px] flex items-center justify-center"><svg class="w-[12px] h-[12px]" viewBox="0 0 12 12"><path fill="none" stroke="#fff" d="M0 8.500 6 3l6 5.500"/></svg></div>
      <div class="w-[24px] flex items-center justify-center"><svg class="w-[16px] h-[16px]" viewBox="0 0 16 16"><rect x="2" y="5" width="8" height="6" rx="1" fill="none" stroke="#fff"/><path fill="none" stroke="#fff" d="M10 7.500 14 5.500v5l-4-2M4 2h5M4 14h5"/></svg></div>
      <div class="w-[24px] flex items-center justify-center"><svg class="w-[18px] h-[16px]" viewBox="0 0 18 16"><path fill="none" stroke="#fff" d="M4.500 2.500h13v9h-13zM2 .5H6v5H.5V.5zM8 14.500h6M11 11.500v3"/></svg></div>
      <div class="w-[24px] flex items-center justify-center"><svg class="w-[16px] h-[16px]" viewBox="0 0 16 16"><path fill="none" stroke="#fff" d="M1 5.500h3L8 2v12l-4-3.500H1zM10 5c1 1.500 1 4.500 0 6M12 3.500c1.500 2.500 1.500 6.500 0 9M14 2c2 3.500 2 8.500 0 12"/></svg></div>
      <div class="w-[32px] bg-white/10 flex items-center justify-center"><svg class="w-[18px] h-[18px]" viewBox="0 0 18 18"><path fill="none" stroke="#fff" d="M8 15c-3 2-6 1-6-1 0-3 5-3 6-7M6 11l8-10 3 2-8 10-3 1zM11 5l3 2"/></svg></div>
      <div class="w-[34px] flex items-center justify-center text-[12px]">ENG</div>
      <div class="w-[72px] flex flex-col items-center justify-center text-[11.5px] leading-[18px]"><span>11:43</span><span>2023/04/28</span></div>
      <div class="w-[48px] flex items-center justify-center relative -translate-x-[3px]"><svg class="w-[16px] h-[16px]" viewBox="0 0 16 16"><path fill="#fff" d="M0 1h16v11H6l-3 3v-3H0z"/><path stroke="#1a2a48" d="M3 4h10M3 7h10"/></svg><span class="absolute left-[26px] top-[15px] w-[16px] h-[16px] rounded-full bg-[#5a6470] border border-white/70 text-[11px] leading-[14px] text-center">1</span></div>
      <div class="w-[5px] border-l border-white/40"></div>
    </div>

    <!-- tooltip over the tray -->
    <div class="absolute left-[1675px] top-[-20px] w-[141px] h-[20px] bg-[#787878] border border-[#9a9a9a] text-[#3a3a3a] text-[12px] leading-[18px] text-center whitespace-nowrap">Windows Ink Workspace</div>
  </footer>
</body>
</html>
